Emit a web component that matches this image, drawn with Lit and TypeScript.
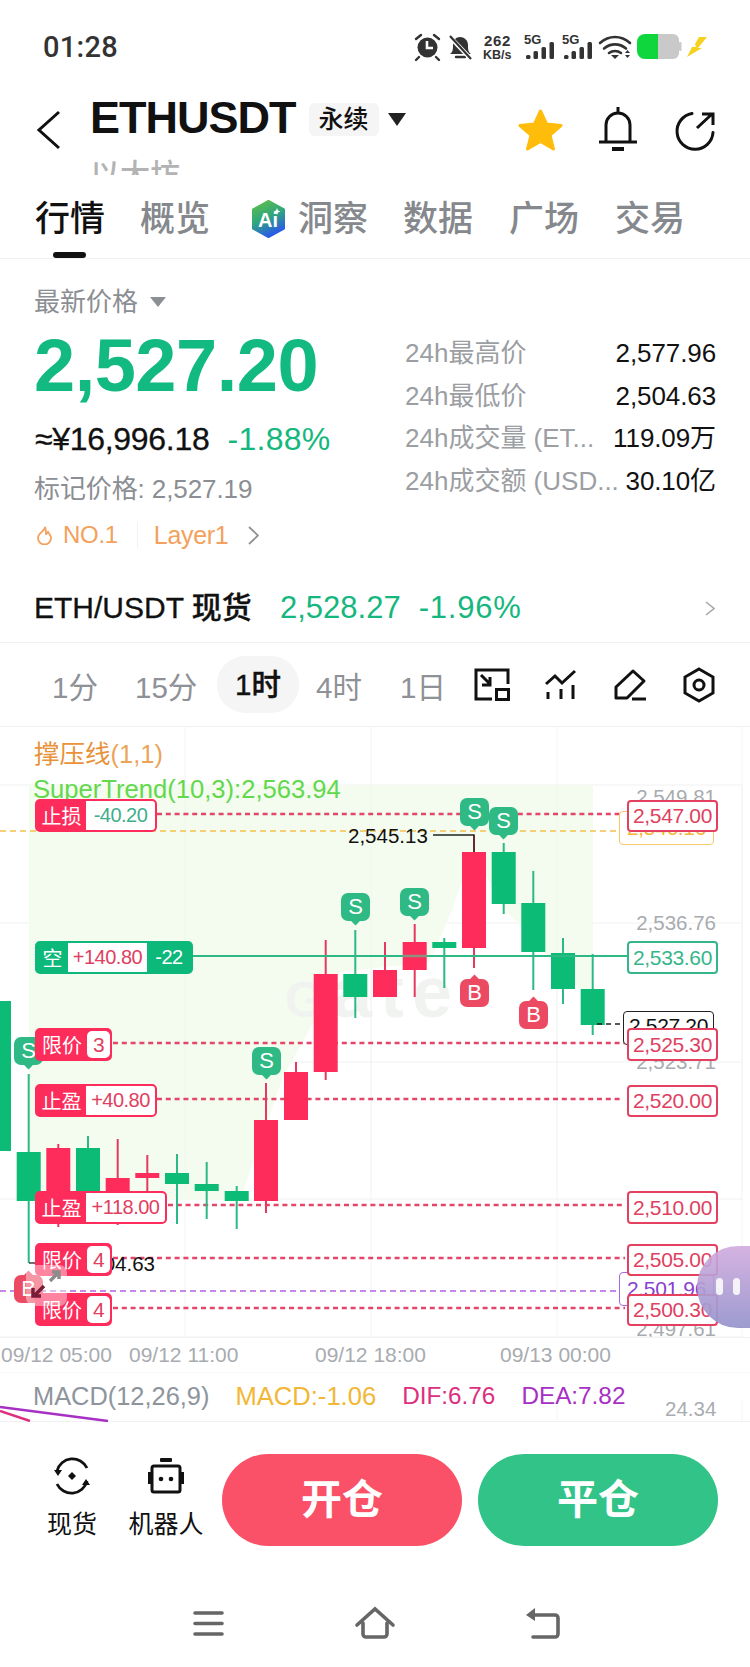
import { LitElement, html, css, svg } from "lit";
import { customElement } from "lit/decorators.js";

const TOP = 727;
const RED = "#fd2c5b";
const GREEN = "#0bbb76";

// cx, bodyTop, bodyBottom, wickTop, wickBottom, colour
const candles: [number, number, number, number, number, string][] = [
  [-1, 1001, 1151, 1001, 1151, GREEN],
  [28.7, 1152, 1201, 1074, 1263, GREEN],
  [58.3, 1148, 1196, 1144, 1227, RED],
  [88, 1148, 1200, 1136, 1205, GREEN],
  [117.7, 1178, 1198, 1139, 1225, RED],
  [147.3, 1173, 1178, 1155, 1198, RED],
  [177, 1173, 1184, 1154, 1224, GREEN],
  [206.7, 1184, 1191, 1162, 1219, GREEN],
  [236.7, 1191, 1201, 1186, 1229, GREEN],
  [266, 1120, 1201, 1083, 1213, RED],
  [296, 1072, 1120, 1062, 1120, RED],
  [325.7, 974, 1072, 940, 1080, RED],
  [355.3, 974, 997, 930, 1018, GREEN],
  [385, 970, 997, 942, 997, RED],
  [414.7, 942, 970, 924, 997, RED],
  [444.3, 942, 948, 938, 988, GREEN],
  [474, 852, 948, 835, 968, RED],
  [503.7, 852, 904, 843, 914, GREEN],
  [533.3, 903, 952, 871, 990, GREEN],
  [563, 953, 989, 938, 1004, GREEN],
  [592.7, 989, 1025, 954, 1035, GREEN],
];

// y, x1, x2
const dashLines: [number, number, number][] = [
  [814, 157, 622],
  [1043, 113, 625],
  [1099, 157, 622],
  [1205, 168, 625],
  [1258, 113, 625],
  [1308, 113, 625],
];

const markers: [string, number, number][] = [
  ["B", 14, 1275],
  ["S", 14, 1037],
  ["S", 252, 1047],
  ["S", 341, 893],
  ["S", 400, 888],
  ["S", 460, 798],
  ["S", 489, 807],
  ["B", 460, 979],
  ["B", 519, 1001],
];

interface Tag {
  kind: "stop" | "limit" | "pos";
  label: string;
  value: string;
  extra?: string;
  y: number;
  vw: number;
}
const tags: Tag[] = [
  { kind: "stop", label: "止损", value: "-40.20", y: 799, vw: 69 },
  { kind: "pos", label: "空", value: "+140.80", extra: "-22", y: 941, vw: 79 },
  { kind: "limit", label: "限价", value: "3", y: 1028, vw: 23 },
  { kind: "stop", label: "止盈", value: "+40.80", y: 1084, vw: 69 },
  { kind: "stop", label: "止盈", value: "+118.00", y: 1191, vw: 79 },
  { kind: "limit", label: "限价", value: "4", y: 1243, vw: 23 },
  { kind: "limit", label: "限价", value: "4", y: 1293, vw: 23 },
];

// text, colour class, left, top, width, height
const priceLabels: [string, string, number, number, number, number][] = [
  ["2,546.16", "yel", 619, 811, 95, 34],
  ["2,527.20", "blk", 623, 1011, 91, 34],
  ["2,501.96", "pur", 619, 1272, 95, 34],
  ["2,547.00", "red", 627, 800, 91, 32],
  ["2,533.60", "grn", 627, 941, 91, 33],
  ["2,525.30", "red", 627, 1028, 91, 33],
  ["2,520.00", "red", 627, 1085, 91, 32],
  ["2,510.00", "red", 627, 1191, 91, 33],
  ["2,505.00", "red", 627, 1244, 91, 32],
  ["2,500.30", "red", 627, 1294, 91, 32],
];

const axisPrices: [string, number][] = [
  ["2,549.81", 804],
  ["2,536.76", 930],
  ["2,523.71", 1069],
  ["2,497.61", 1336],
];

@customElement("app-root")
export class AppRoot extends LitElement {
  static styles = css`
    :host {
      display: block;
      width: 750px;
      height: 1667px;
      overflow: hidden;
      background: #fff;
      color: #111;
      font-family: "Liberation Sans", "Noto Sans CJK SC", sans-serif;
    }
    svg { display: block; }
    .status { height: 94px; display: flex; align-items: center; padding-left: 43px; }
    .time { font: 500 29px/1 Roboto, sans-serif; color: #333; letter-spacing: 0.3px; }
    .status-icons { margin-left: auto; margin-right: 40px; }
    .st-txt { font-family: "Liberation Sans", sans-serif; font-weight: 700; fill: #333; }

    .header { height: 81px; overflow: hidden; display: flex; }
    .back { margin: 16px 0 0 36px; }
    .title-col { margin-left: 28px; }
    .title-row { height: 48px; display: flex; align-items: center; }
    .title { font-size: 45px; font-weight: 700; line-height: 48px; letter-spacing: -1px; }
    .badge { margin-left: 13px; width: 70px; height: 33px; margin-top: 3px; background: #f5f5f5; border-radius: 6px;
      font-size: 25px; line-height: 33px; text-align: center; font-weight: 500; }
    .caret { margin: 2px 0 0 9px; }
    .sub { margin-top: 18px; font-size: 30px; line-height: 30px; color: #b3b3b3; font-weight: 500; }
    .head-actions { margin-left: auto; margin-right: 1px; }

    .tabs { box-sizing: border-box; height: 84px; border-bottom: 1px solid #f0f1f2;
      display: flex; align-items: flex-start; padding: 24px 0 0 35px; }
    .tab { font-size: 35px; line-height: 40px; font-weight: 500; color: #85888c; position: relative; white-space: nowrap; }
    .tab.on { color: #111; }
    .tab.on::after { content: ""; position: absolute; left: 18px; top: 53px; width: 33px; height: 6px; border-radius: 3px; background: #111; }
    .g35 { margin-left: 35px; }
    .g36 { margin-left: 36px; }
    .g37 { margin-left: 37px; }
    .g41 { margin-left: 41px; }
    .ai-tab { display: flex; align-items: center; gap: 12px; }

    .summary { display: flex; }
    .left { width: 405px; padding-left: 34px; box-sizing: border-box; }
    .lab { padding-top: 28px; display: flex; align-items: center; font-size: 26px; line-height: 30px; color: #8b8e93; gap: 12px; }
    .price { margin-top: 12px; font-size: 74px; line-height: 74px; font-weight: 700; color: #12b981; letter-spacing: -0.5px; white-space: nowrap; }
    .cny { margin: 19px 0 0 1px; display: flex; gap: 18px; font-size: 32px; line-height: 34px; white-space: nowrap; }
    .cny b { font-weight: 400; color: #111; -webkit-text-stroke: 0.3px #111; letter-spacing: -0.3px; }
    .cny span { color: #14b87e; letter-spacing: 0.3px; }
    .mark { margin-top: 16px; font-size: 26px; line-height: 34px; color: #8b8e93; white-space: nowrap; letter-spacing: -0.1px; }
    .hot { margin-top: 12px; display: flex; align-items: center; height: 34px; font-size: 25px; color: #f3a15c; letter-spacing: -0.3px; }
    .hot svg:first-child { margin-left: 2px; }
    .hot .sep { width: 1px; height: 26px; background: #f3f3f3; margin: 0 16px 0 19px; }
    .hot .no { margin-left: 10px; font-size: 24px; }
    .hot svg.chev { margin-left: 20px; }
    .right { flex: 1; padding: 73px 34px 0 0; }
    .stat { display: flex; justify-content: space-between; height: 42.5px; line-height: 42.5px; font-size: 26px; white-space: nowrap; }
    .stat span { color: #9b9ea2; }
    .stat b { font-weight: 400; color: #111; letter-spacing: -0.1px; }

    .spot { margin-top: 36px; height: 40px; line-height: 40px; padding: 0 35px 0 34px; display: flex; align-items: center; font-size: 30px; white-space: nowrap; }
    .spot b { font-weight: 500; -webkit-text-stroke: 0.3px #111; width: 246px; }
    .spot span { color: #15b77e; font-size: 31px; margin-right: 18px; }
    .spot span.pct { letter-spacing: 0.8px; }
    .spot svg { margin-left: auto; }
    .sections { box-sizing: border-box; height: 15px; border-bottom: 1px solid #f0f1f2; }

    .tfbar { height: 84px; box-sizing: border-box; border-bottom: 1px solid #f0f1f2; padding-left: 52px;
      display: grid; grid-template-columns: 83px 82px 99px 84px 74px 71px 69px 69px 35px; align-items: center; font-size: 29.5px; color: #8e9196; }
    .tf-on { width: 82px; height: 57px; line-height: 57px; border-radius: 28px; background: #f5f5f5; color: #111; text-align: center; font-weight: 500; -webkit-text-stroke: 0.4px #111; }

    .chart { position: relative; height: 610px; overflow: hidden; }
    .plot { position: absolute; left: 0; top: 0; }
    .ax { font-size: 20.5px; fill: #a8abaf; }
    .blacktxt { font-size: 20.5px; fill: #111; }
    .wm { font-weight: 700; fill: #f0f3f0; letter-spacing: 8px; }
    .ind1 { font-size: 25.500px; fill: #e8923a; }
    .ind2 { font-size: 25.600px; fill: #62d94c; }

    .mk { position: absolute; width: 29px; height: 28px; border-radius: 7px; color: #fff; font-size: 22px; line-height: 28px; text-align: center; }
    .mk::after { content: ""; position: absolute; left: 11px; width: 7px; height: 7px; transform: rotate(45deg); background: inherit; }
    .mk.S { background: #2fb985; }
    .mk.S::after { bottom: -3px; }
    .mk.B { background: #ec4a63; }
    .mk.B::after { top: -3px; }

    .tag { position: absolute; left: 35px; box-sizing: border-box; height: 33px; display: flex; align-items: stretch; border-radius: 5px; border: 2px solid #fd2c5b; background: #fd2c5b; overflow: hidden; color: #fff; font-size: 20px; letter-spacing: -0.5px; white-space: nowrap; }
    .tag .l { flex: none; display: flex; align-items: center; justify-content: center; font-size: 20px; letter-spacing: 0; }
    .tag .v { flex: none; background: #fff; display: flex; align-items: center; justify-content: center; }
    .tag.stop .l { width: 49px; }
    .tag.stop .v.loss { color: #3fae8c; }
    .tag.stop .v.gain { color: #e0405f; }
    .tag.limit .v { color: #e0405f; border-radius: 5px; margin: 1px 0; font-size: 21px; }
    .tag.limit .l { width: 50px; }
    .tag.pos { background: #0cb87a; border-color: #0cb87a; }
    .tag.pos .l { width: 31px; }
    .tag.pos .v { color: #e0405f; }
    .tag.pos .x { width: 44px; display: flex; align-items: center; justify-content: center; }
    .pl { position: absolute; box-sizing: border-box; background: #fff; border-radius: 4px; font-size: 21px; text-align: center; letter-spacing: -0.35px; border: 2px solid; display: flex; align-items: center; justify-content: center; }
    .pl.red { border-width: 2.5px; border-color: #e4405f; color: #e0405f; }
    .pl.grn { border-width: 2.5px; border-color: #35b68a; color: #35b68a; }
    .pl.yel { border-color: #f7c868; border-width: 1.5px; color: #f5b53a; }
    .pl.blk { border-color: #222; border-width: 1.5px; color: #111; padding-bottom: 5px; }
    .pl.pur { border-color: #a56be0; border-width: 1.5px; color: #8a3fd0; }
    .expand { position: absolute; left: 26px; top: 538px; width: 41px; height: 41px; border-radius: 8px; background: rgba(255, 255, 255, 0.42); }
    .float { position: absolute; left: 697px; top: 519px; width: 60px; height: 82px; border-radius: 41px 0 0 41px;
      background: linear-gradient(180deg, rgba(207, 168, 222, 0.88), rgba(152, 150, 204, 0.95)); }
    .pill { position: absolute; top: 32px; width: 7px; height: 17px; border-radius: 4px; background: rgba(255, 255, 255, 0.85); }
    .pill.a { left: 19px; }
    .pill.b { left: 36px; }

    .xaxis { box-sizing: border-box; height: 36px; border-top: 1px solid #f0f1f2; border-bottom: 1px solid #f9f9f9;
      padding-left: 1px; display: grid; grid-template-columns: 128px 186px 185px 112px; align-items: center; font-size: 21px; color: #a8abaf; white-space: nowrap; }
    .macd { position: relative; height: 49px; border-bottom: 1px solid #f0f1f2; box-sizing: border-box; display: flex; padding: 9px 0 0 33px; font-size: 24.3px; line-height: 28px; white-space: nowrap; }
    .macd span { margin-right: 26px; position: relative; }
    .m0 { color: #8e949c; font-size: 25.400px; }
    .m1 { color: #f2b736; font-size: 25.600px; }
    .m2 { color: #dc2f7e; }
    .m3 { color: #a730c4; }
    .m4 { position: absolute; left: 665px; top: 24px; font-size: 20.5px; line-height: 24px; color: #a8abaf; font-style: normal; }
    .macd svg { position: absolute; left: 0; top: 0; }

    .bottom { box-sizing: border-box; height: 178px; display: flex; align-items: flex-start; padding-top: 32px; }
    .act { display: flex; flex-direction: column; align-items: center; font-size: 25px; line-height: 30px; white-space: nowrap; padding-top: 3px; }
    .act svg { margin-bottom: 14px; }
    .act.a1 { width: 52px; margin-left: 46px; }
    .act.a2 { width: 78px; margin-left: 29px; }
    .btn { width: 240px; height: 92px; border-radius: 46px; color: #fff; font-size: 41px; font-weight: 700; line-height: 92px; text-align: center; }
    .btn.open { background: #fa5068; margin-left: 17px; }
    .btn.close { background: #31c388; margin-left: 16px; }
  `;

  statusIcons() {
    const bars = (x: number) => svg`
      <rect x=${x} y="55" width="4.5" height="4" rx="1.5" fill="#333"/>
      <rect x=${x + 7.5} y="51" width="4.5" height="8" rx="1.5" fill="#333"/>
      <rect x=${x + 15.5} y="47" width="4.5" height="12" rx="1.5" fill="#333"/>
      <rect x=${x + 23.5} y="42" width="4.5" height="17" rx="1.5" fill="#333"/>`;
    return html`<svg class="status-icons" width="300" height="32" viewBox="410 31 300 32">
      <circle cx="427.5" cy="47.5" r="10" fill="#333"/>
      <path d="M427 41v7h6" stroke="#fff" stroke-width="2.6" fill="none"/>
      <path d="M416 39l5-4M439 39l-5-4M419 57l-3 3M436 57l3 3" stroke="#333" stroke-width="2.4" fill="none" stroke-linecap="round"/>
      <path d="M450 54c3-2 3-5 3-9 0-5 3-8 7-8s8 3 8 8c0 4 0 7 3 9z" fill="#333"/>
      <path d="M456 57h9" stroke="#333" stroke-width="2.4" stroke-linecap="round"/>
      <path d="M449 36l22 23" stroke="#fff" stroke-width="4.5"/>
      <path d="M450 36l21 23" stroke="#333" stroke-width="2.2"/>
      <text class="st-txt" x="484" y="46" font-size="15" letter-spacing="0.6">262</text>
      <text class="st-txt" x="483" y="59" font-size="12.5">KB/s</text>
      <text class="st-txt" x="524" y="44" font-size="13">5G</text>
      <text class="st-txt" x="562" y="44" font-size="13">5G</text>
      ${bars(526)}${bars(564)}
      <path d="M600 43c9-8 21-8 30 0M604 48.500c6.500-5.500 15.500-5.500 22 0M609 53c3.500-2.500 8.500-2.500 12 0" stroke="#333" stroke-width="2.6" fill="none" stroke-linecap="round"/>
      <path d="M611 55h8l-4 4z" fill="#333"/>
      <path d="M625 53l2.500-3 2.500 3zM625 55l2.500 3 2.500-3z" fill="#333"/>
      <path d="M645 34h13v25h-13a8 8 0 0 1-8-8v-9a8 8 0 0 1 8-8z" fill="#0fd63c"/>
      <path d="M658 34h15a6 6 0 0 1 6 6v13a6 6 0 0 1-6 6h-15z" fill="#c9c9c9"/>
      <rect x="679" y="42" width="2.500" height="9" rx="1" fill="#c9c9c9"/>
      <path d="M699 37h8l-9 11h4l-15 9 5-10h4l-1-3z" fill="#f5d21f"/>
    </svg>`;
  }

  header() {
    return html`<div class="header">
      <svg class="back" width="26" height="40" viewBox="0 0 26 40"><path d="M23 2L3 20l20 18" stroke="#111" stroke-width="3" fill="none"/></svg>
      <div class="title-col">
        <div class="title-row">
          <div class="title">ETHUSDT</div>
          <div class="badge">永续</div>
          <svg class="caret" width="18" height="13" viewBox="0 0 18 13"><path d="M0 0h18L9 13z" fill="#222"/></svg>
        </div>
        <div class="sub">以太坊</div>
      </div>
      <svg class="head-actions" width="240" height="81" viewBox="510 94 240 81">
        <path d="M541.500 111l6 13 14.500 1.500-11 9.500 3.500 14-13-7.500-13 7.500 3.500-14-11-9.500 14.500-1.500z" fill="#ffbc0a" stroke="#ffbc0a" stroke-width="3" stroke-linejoin="round"/>
        <path d="M607 141v-16a12 12 0 0 1 24 0v16M600 142h38M619 107v5" stroke="#111" stroke-width="3" fill="none"/>
        <rect x="613" y="147" width="12" height="4" fill="#111"/>
        <path d="M693 113.500a18 18 0 1 0 21 19" stroke="#111" stroke-width="3" fill="none" stroke-linecap="round"/>
        <path d="M698 128l15-14M703 114h11v11" stroke="#111" stroke-width="3" fill="none"/>
      </svg>
    </div>`;
  }

  tabs() {
    return html`<div class="tabs">
      <div class="tab on">行情</div>
      <div class="tab g35">概览</div>
      <div class="tab ai-tab g41">
        <svg width="35" height="38" viewBox="0 0 35 38">
          <defs><linearGradient id="ai" x1="0" y1="0" x2="0.4" y2="1"><stop offset="0" stop-color="#62c245"/><stop offset="0.55" stop-color="#2fa67c"/><stop offset="1" stop-color="#2a5fe4"/></linearGradient></defs>
          <path d="M17.500 1L33 9.500v19L17.500 37 2 28.500v-19z" fill="url(#ai)" stroke="url(#ai)" stroke-width="2" stroke-linejoin="round"/>
          <text x="7" y="27" font-size="20" font-weight="700" fill="#fff" font-family="Liberation Sans">Ai</text>
          <path d="M26 8l1 2.500 2.500 1-2.500 1-1 2.500-1-2.500-2.500-1 2.500-1z" fill="#fff"/>
        </svg>
        <span>洞察</span>
      </div>
      <div class="tab g35">数据</div>
      <div class="tab g36">广场</div>
      <div class="tab g36">交易</div>
    </div>`;
  }

  summary() {
    return html`<div class="summary">
      <div class="left">
        <div class="lab">最新价格 <svg width="16" height="10" viewBox="0 0 16 10"><path d="M0 0h16L8 10z" fill="#8b8e93"/></svg></div>
        <div class="price">2,527.20</div>
        <div class="cny"><b>≈¥16,996.18</b><span>-1.88%</span></div>
        <div class="mark">标记价格: 2,527.19</div>
        <div class="hot">
          <svg width="17" height="19" viewBox="0 0 17 19"><path d="M9 1c0 4-7 6-7 11a6.500 6.500 0 0 0 13 0c0-3-2-4-3-6-1 1-1 2-2 2 0-3 0-5-1-7z" stroke="#f3a15c" stroke-width="1.800" fill="none"/></svg>
          <span class="no">NO.1</span><i class="sep"></i><span>Layer1</span>
          <svg class="chev" width="11" height="19" viewBox="0 0 11 19"><path d="M1 1l9 8.500L1 18" stroke="#8f9296" stroke-width="1.800" fill="none"/></svg>
        </div>
      </div>
      <div class="right">
        <div class="stat"><span>24h最高价</span><b>2,577.96</b></div>
        <div class="stat"><span>24h最低价</span><b>2,504.63</b></div>
        <div class="stat"><span>24h成交量 (ET...</span><b>119.09万</b></div>
        <div class="stat"><span>24h成交额 (USD...</span><b>30.10亿</b></div>
      </div>
    </div>
    <div class="spot"><b>ETH/USDT 现货</b><span>2,528.27</span><span class="pct">-1.96%</span>
      <svg width="10" height="15" viewBox="0 0 10 15"><path d="M1 1l8 6.500L1 14" stroke="#a5a8ac" stroke-width="1.600" fill="none"/></svg>
    </div>
    <div class="sections"></div>`;
  }

  tfbar() {
    const ic = (w: number, h: number, vb: string, body: unknown) =>
      html`<svg width=${w} height=${h} viewBox=${vb}>${body}</svg>`;
    return html`<div class="tfbar">
      <span>1分</span><span>15分</span><span class="tf-on">1时</span><span>4时</span><span>1日</span>
      ${ic(36, 34, "475 668 36 34", svg`<g stroke="#111" stroke-width="3" fill="none">
        <path d="M493 699h-16v-29h32v14"/><rect x="497.500" y="689.500" width="12" height="10"/>
        <path d="M482 675l9 9M491 677v8h-8"/></g>`)}
      ${ic(32, 32, "546 669 32 32", svg`<g stroke="#111" stroke-width="3" fill="none">
        <path d="M547 684l9-8 7 7 13-12"/><path d="M549 692v7M562 689v10M574 685v14"/></g>`)}
      ${ic(34, 34, "615 667 34 34", svg`<g stroke="#111" stroke-width="3" fill="none" stroke-linejoin="round">
        <path d="M617 697v-11l17-16 11 10-17 17z"/><path d="M633 698h14"/></g>`)}
      ${ic(32, 36, "684 667 32 36", svg`<g stroke="#111" stroke-width="3" fill="none">
        <path d="M700 669l14 8v16l-14 8-14-8v-16z"/><circle cx="700" cy="685" r="5"/></g>`)}
    </div>`;
  }

  plot() {
    const grid = [785, 923, 1062, 1199, 1337];
    const vgrid = [185, 371, 557, 742];
    return html`<svg class="plot" width="750" height="610" viewBox="0 ${TOP} 750 610">
      ${vgrid.map((x) => svg`<line x1=${x} x2=${x} y1=${TOP} y2="1337" stroke="#f3f4f5"/>`)}
      ${grid.map((y) => svg`<line x1="0" x2="742" y1=${y} y2=${y} stroke="#f0f1f2"/>`)}
      <path d="M29 785H593V1003L508 913 472 853 452 910 430 962 340 972 313 1023 283 1077 240 1200H29z" fill="#f4fcef"/>
      <text class="wm" x="285" y="1017"><tspan font-size="50">G</tspan><tspan font-size="72">ate</tspan></text>
      ${vgrid.map((x) => svg`<line x1=${x} x2=${x} y1="785" y2="1190" stroke="#eef3ea" stroke-opacity="0.7"/>`)}
      <text class="ind1" x="34" y="763">撑压线<tspan fill-opacity="0.85">(1,1)</tspan></text>
      <text class="ind2" x="33" y="798">SuperTrend(10,3):2,563.94</text>
      ${axisPrices.map(([t, y]) => svg`<text class="ax" x="716" y=${y} text-anchor="end">${t}</text>`)}
      <line x1="0" x2="618" y1="831" y2="831" stroke="#f3c04f" stroke-width="1.500" stroke-dasharray="6 4"/>
      <line x1="0" x2="618" y1="1291" y2="1291" stroke="#b861e0" stroke-width="1.500" stroke-dasharray="6 4"/>
      ${dashLines.map(([y, a, b]) => svg`<line x1=${a} x2=${b} y1=${y} y2=${y} stroke="#e4466a" stroke-width="2.500" stroke-dasharray="5 3.800"/>`)}
      ${candles.map(([cx, t, b, wt, wb, c]) => svg`
        <rect x=${cx - 1} y=${wt} width="2" height=${wb - wt} fill=${c === RED ? "#e5395f" : "#2cb985"}/>
        <rect x=${cx - 12} y=${t} width="24" height=${b - t} fill=${c}/>`)}
      <line x1="193" x2="627" y1="956" y2="956" stroke="#2cb985" stroke-width="2"/>
      <line x1="403" x2="427" y1="956" y2="956" stroke="#8f9080" stroke-width="2.500"/>
      <path d="M433 835H474V852" stroke="#222" stroke-width="1.300" fill="none"/>
      <text class="blacktxt" x="348" y="843">2,545.13</text>
      <path d="M29 1263H40" stroke="#222" stroke-width="1.300"/>
      <text class="blacktxt" x="155" y="1271" text-anchor="end">2,504.63</text>
      <line x1="597" x2="620" y1="1024" y2="1024" stroke="#222" stroke-width="1.300" stroke-dasharray="5 4"/>
    </svg>`;
  }

  chart() {
    return html`<div class="chart">
      ${this.plot()}
      ${markers.map(([t, x, y]) => html`<div class="mk ${t}" style="left:${x}px;top:${y - TOP}px">${t}</div>`)}
      ${priceLabels.map(([t, c, x, y, w, h]) => html`<div class="pl ${c}" style="left:${x}px;top:${y - TOP}px;width:${w}px;height:${h}px">${t}</div>`)}
      ${tags.map((g) => html`<div class="tag ${g.kind}" style="top:${g.y - TOP}px">
        <span class="l">${g.label}</span>
        <span class="v ${g.value.startsWith("-") ? "loss" : "gain"}" style="width:${g.vw}px">${g.value}</span>
        ${g.extra ? html`<span class="x">${g.extra}</span>` : null}
      </div>`)}
      <div class="expand">
        <svg width="41" height="41" viewBox="0 0 41 41">
          <path d="M24 16l9-9M26 7h7v7" stroke="#8c8c8c" stroke-width="3.500" fill="none"/>
          <path d="M18 21l-9 9M7 23v8h8" stroke="#7a1c38" stroke-width="3.500" fill="none"/>
        </svg>
      </div>
      <div class="float"><i class="pill a"></i><i class="pill b"></i></div>
    </div>`;
  }

  bottom() {
    return html`<div class="bottom">
      <div class="act a1">
        <svg width="40" height="38" viewBox="52 1458 40 38">
          <path d="M57 1472a16 16 0 0 1 30-3M87 1482a16 16 0 0 1-30 3" stroke="#111" stroke-width="2.800" fill="none"/>
          <path d="M54 1471h8l-4 6zM90 1486h-8l4-6z" fill="#111"/>
          <path d="M72 1473l4 4-4 4-4-4z" fill="#111"/>
        </svg>
        <span>现货</span>
      </div>
      <div class="act a2">
        <svg width="38" height="38" viewBox="148 1458 38 38">
          <rect x="161" y="1459" width="12" height="4" rx="1" fill="#111"/>
          <rect x="153" y="1467" width="28" height="26" rx="2" stroke="#111" stroke-width="3" fill="none"/>
          <rect x="149" y="1473" width="3" height="12" fill="#111"/>
          <rect x="182" y="1473" width="3" height="12" fill="#111"/>
          <circle cx="162" cy="1480" r="2.300" fill="#111"/>
          <circle cx="172" cy="1480" r="2.300" fill="#111"/>
        </svg>
        <span>机器人</span>
      </div>
      <div class="btn open">开仓</div>
      <div class="btn close">平仓</div>
    </div>
    <svg width="750" height="45" viewBox="0 1600 750 45">
      <g stroke="#666" stroke-width="3.600" stroke-linecap="round" fill="none">
        <path d="M195 1613h27M195 1623.500h27M195 1634h27"/>
        <path d="M357 1625l18-16 18 16"/>
        <path d="M363 1623v11a3 3 0 0 0 3 3h18a3 3 0 0 0 3-3v-11"/>
        <path d="M534 1615h21a3 3 0 0 1 3 3v16a3 3 0 0 1-3 3h-22"/>
      </g>
      <path d="M526 1615l9-7v13z" fill="#666"/>
    </svg>`;
  }

  render() {
    return html`
      <div class="status"><div class="time">01:28</div>${this.statusIcons()}</div>
      ${this.header()}
      ${this.tabs()}
      ${this.summary()}
      ${this.tfbar()}
      ${this.chart()}
      <div class="xaxis"><span>09/12 05:00</span><span>09/12 11:00</span><span>09/12 18:00</span><span>09/13 00:00</span></div>
      <div class="macd">
        <svg width="750" height="49" viewBox="0 1373 750 49">
          <path d="M0 1407l108 14" stroke="#a730c4" stroke-width="2.500" fill="none"/>
          <path d="M0 1411l30 10" stroke="#dc2f7e" stroke-width="2.500" fill="none"/>
          <path d="M557 1400v22M742 1400v22" stroke="#f3f4f5"/>
        </svg>
        <span class="m0">MACD(12,26,9)</span><span class="m1">MACD:-1.06</span><span class="m2">DIF:6.76</span><span class="m3">DEA:7.82</span><i class="m4">24.34</i>
      </div>
      ${this.bottom()}
    `;
  }
}
